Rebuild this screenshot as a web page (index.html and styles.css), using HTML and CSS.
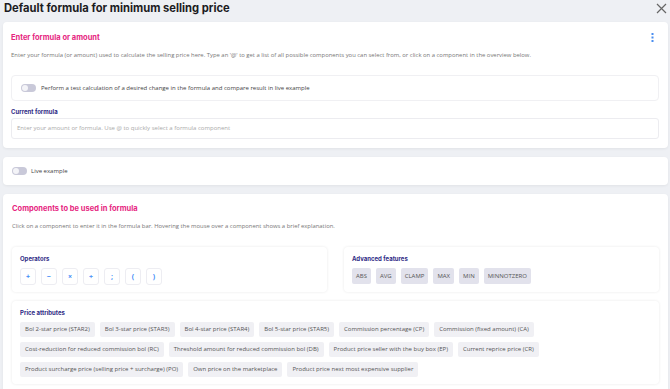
FILE: index.html
```html
<!DOCTYPE html>
<html lang="en">
<head>
    <meta charset="UTF-8">
    <meta name="viewport" content="width=device-width, initial-scale=1.0">
    <title>Default formula for minimum selling price</title>
    <link rel="stylesheet" href="styles.css">
</head>
<body>
    <div class="header">
        <h1>Default formula for minimum selling price</h1>
        <svg class="close" width="11" height="11" viewBox="0 0 11 11">
            <path d="M1 1L10 10M10 1L1 10" stroke="#666" stroke-width="1.2" fill="none"/>
        </svg>
    </div>

    <div class="page">
        <div class="card card-formula">
            <div class="card-head">
                <h2>Enter formula or amount</h2>
                <svg class="kebab" width="3" height="9" viewBox="0 0 3 9">
                    <rect x="0.5" y="0" width="2" height="2" fill="#4a8ef0"/>
                    <rect x="0.5" y="3.5" width="2" height="2" fill="#4a8ef0"/>
                    <rect x="0.5" y="7" width="2" height="2" fill="#4a8ef0"/>
                </svg>
            </div>
            <p class="desc">Enter your formula (or amount) used to calculate the selling price here. Type an '@' to get a list of all possible components you can select from, or click on a component in the overview below.</p>

            <div class="test-row">
                <span class="toggle"></span>
                <span>Perform a test calculation of a desired change in the formula and compare result in live example</span>
            </div>

            <h3>Current formula</h3>
            <div class="formula-input">Enter your amount or formula. Use @ to quickly select a formula component</div>
        </div>

        <div class="card card-live">
            <span class="toggle"></span>
            <span>Live example</span>
        </div>

        <div class="card card-components">
            <h2>Components to be used in formula</h2>
            <p class="desc">Click on a component to enter it in the formula bar. Hovering the mouse over a component shows a brief explanation.</p>

            <div class="groups">
                <div class="group">
                    <h3>Operators</h3>
                    <div class="ops">
                        <span class="op">+</span>
                        <span class="op">&minus;</span>
                        <span class="op">&times;</span>
                        <span class="op">&divide;</span>
                        <span class="op">;</span>
                        <span class="op">(</span>
                        <span class="op">)</span>
                    </div>
                </div>
                <div class="group">
                    <h3>Advanced features</h3>
                    <div class="chips">
                        <span class="fn">ABS</span>
                        <span class="fn">AVG</span>
                        <span class="fn">CLAMP</span>
                        <span class="fn">MAX</span>
                        <span class="fn">MIN</span>
                        <span class="fn">MINNOTZERO</span>
                    </div>
                </div>
            </div>

            <div class="group group-wide">
                <h3>Price attributes</h3>
                <div class="chips">
                    <span class="attr">Bol 2-star price (STAR2)</span>
                    <span class="attr">Bol 3-star price (STAR3)</span>
                    <span class="attr">Bol 4-star price (STAR4)</span>
                    <span class="attr">Bol 5-star price (STAR5)</span>
                    <span class="attr">Commission percentage (CP)</span>
                    <span class="attr">Commission (fixed amount) (CA)</span>
                    <span class="attr">Cost-reduction for reduced commission bol (RC)</span>
                    <span class="attr">Threshold amount for reduced commission bol (DB)</span>
                    <span class="attr">Product price seller with the buy box (EP)</span>
                    <span class="attr">Current reprice price (CR)</span>
                    <span class="attr">Product surcharge price (selling price + surcharge) (PO)</span>
                    <span class="attr">Own price on the marketplace</span>
                    <span class="attr">Product price next most expensive supplier</span>
                </div>
            </div>
        </div>
    </div>
</body>
</html>
```

FILE: styles.css
```css
body {
    font-family: 'Open Sans', sans-serif;
    margin: 0;
    padding: 0;
    background: #eef0f4;
    color: #555;
    font-size: 6px;
    overflow: hidden;
}
.header {
    display: flex;
    justify-content: space-between;
    align-items: center;
    height: 15px;
    padding: 0 3px 0 4px;
}
h1 {
    font-family: 'Inter', sans-serif;
    font-size: 11.2px;
    font-weight: 700;
    color: #1c1c22;
    margin: 0;
}
.close {
    margin-top: 1px;
}
.page {
    display: flex;
    flex-direction: column;
    gap: 9px;
    padding: 7px 2px 0 3px;
}
.card {
    background: #fff;
    border-radius: 4px;
    box-shadow: 0 1px 3px rgba(0,0,0,0.06);
}
.card-formula {
    padding: 11px 9px 9px 8px;
}
.card-head {
    display: flex;
    justify-content: space-between;
    align-items: center;
}
.kebab {
    margin-right: 5px;
}
h2 {
    font-family: 'Inter', sans-serif;
    font-size: 7.5px;
    font-weight: 700;
    color: #e6267f;
    margin: 0;
}
h3 {
    font-family: 'Inter', sans-serif;
    font-size: 6px;
    font-weight: 700;
    color: #2f2b85;
    margin: 0;
}
.desc {
    margin: 9px 0 0;
    color: #777;
    font-size: 5.9px;
}
.test-row {
    display: flex;
    align-items: center;
    gap: 5px;
    margin-top: 16px;
    height: 24px;
    padding: 0 9px;
    border: 1px solid #f0f0f3;
    border-radius: 4px;
    color: #444;
}
.toggle {
    display: inline-block;
    width: 15px;
    height: 8px;
    border-radius: 5px;
    background: #c9c9d9;
    position: relative;
}
.toggle::after {
    content: '';
    position: absolute;
    left: 1px;
    top: 1px;
    width: 6px;
    height: 6px;
    border-radius: 50%;
    background: #f4f4f8;
}
.card-formula h3 {
    margin-top: 7px;
}
.formula-input {
    margin-top: 3px;
    height: 19px;
    line-height: 19px;
    padding: 0 5px;
    border: 1px solid #ececf0;
    border-radius: 3px;
    color: #aaa;
}
.card-live {
    display: flex;
    align-items: center;
    gap: 4px;
    height: 28px;
    padding: 0 9px;
    color: #444;
}
.card-components {
    padding: 10px 9px 10px 9px;
}
.groups {
    display: flex;
    gap: 17px;
    margin-top: 17px;
}
.group {
    flex: 1;
    padding: 8px 8px 7px;
    border-radius: 4px;
    box-shadow: 0 0 3px rgba(0,0,0,0.09);
}
.group-wide {
    margin-top: 9px;
}
.ops, .chips {
    display: flex;
    flex-wrap: wrap;
    gap: 5px;
    margin-top: 6px;
}
.op {
    box-sizing: border-box;
    width: 16px;
    height: 17px;
    display: flex;
    align-items: center;
    justify-content: center;
    border: 1px solid #ededf2;
    border-radius: 3px;
    color: #3d8af7;
    font-weight: 700;
    font-size: 7px;
}
.fn {
    padding: 0 4px;
    height: 16px;
    line-height: 16px;
    background: #e2e2ec;
    border-radius: 2px;
    color: #555;
}
.attr {
    padding: 0 5px;
    height: 15px;
    line-height: 15px;
    background: #f0f0f4;
    border-radius: 2px;
    color: #555;
}
```
